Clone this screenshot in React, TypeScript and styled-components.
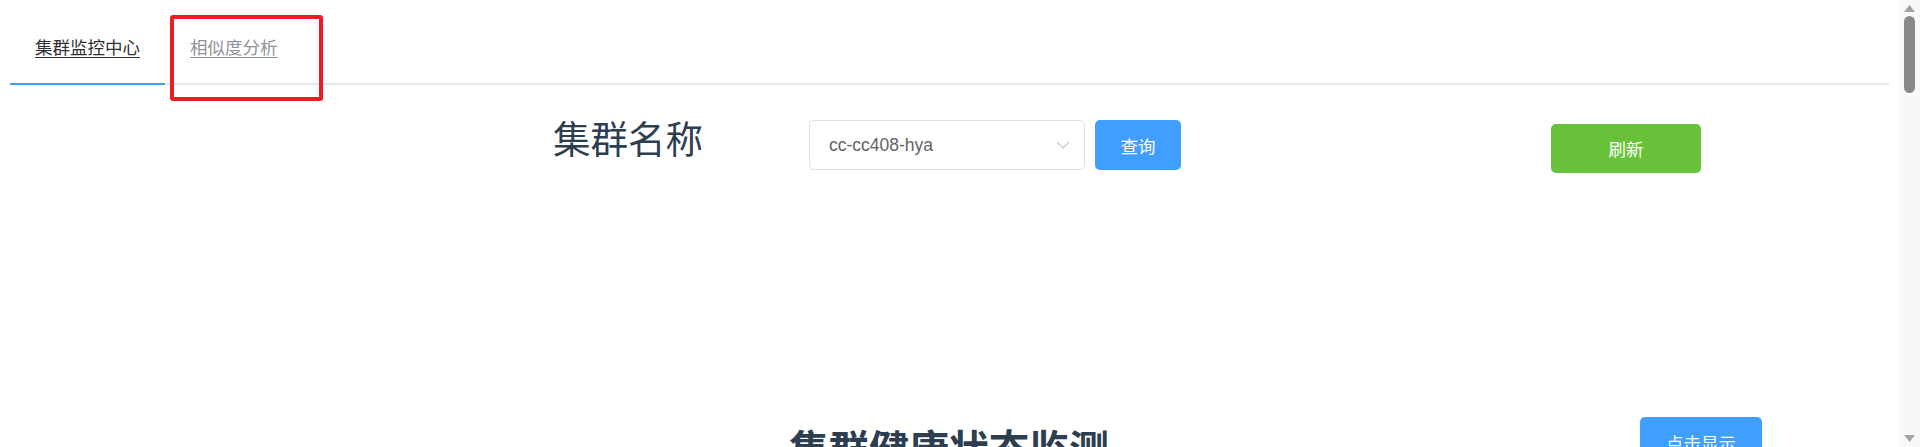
import React from "react";
import styled, { createGlobalStyle, css } from "styled-components";

const GlobalStyle = createGlobalStyle`
  html, body {
    scrollbar-width: none;
  }
  body {
    margin: 0;
    background: #ffffff;
    font-family: "Liberation Sans", "Noto Sans CJK SC", Arial, sans-serif;
    color: #2c3e50;
  }
`;

const Shell = styled.div`
  display: flex;
  align-items: flex-start;
`;

const Page = styled.div`
  flex: 1;
  min-width: 0;
  padding: 10px;
  min-height: 2380px;
  box-sizing: border-box;
`;

const Rail = styled.aside`
  position: sticky;
  top: 0;
  flex: none;
  width: 21px;
  height: 100vh;
  background: #f8f8f8;
  display: flex;
  flex-direction: column;
  align-items: center;
`;

const RailArrow = styled.svg<{ $bottom?: boolean }>`
  display: block;
  margin-top: ${(p) => (p.$bottom ? "auto" : "5px")};
  margin-bottom: ${(p) => (p.$bottom ? "5px" : "0")};
`;

const Thumb = styled.div`
  margin-top: 4px;
  width: 11px;
  height: 77px;
  border-radius: 6px;
  background: #8a8a8a;
`;

const Tabs = styled.div`
  position: relative;
`;

const TabNav = styled.nav`
  display: flex;
  height: 73px;
  border-bottom: 2px solid #e4e7ed;
`;

const TabItem = styled.a<{ $active?: boolean }>`
  position: relative;
  display: block;
  padding: 0 25px;
  line-height: 73px;
  font-size: 17.5px;
  font-family: "Noto Sans CJK SC", sans-serif;
  text-decoration: underline;
  text-underline-offset: 3px;
  text-decoration-thickness: 1px;
  color: ${(p) => (p.$active ? "#303133" : "#909399")};
  cursor: pointer;
  ${(p) =>
    p.$active &&
    css`
      &::after {
        content: "";
        position: absolute;
        left: 0;
        right: 0;
        bottom: -2px;
        height: 2px;
        background: #409eff;
      }
    `}
`;

const Highlight = styled.div`
  position: absolute;
  left: 160px;
  top: 5px;
  width: 153px;
  height: 86px;
  box-sizing: border-box;
  border: 4px solid #ec1c24;
  border-radius: 3px;
  pointer-events: none;
`;

const SearchRow = styled.div`
  display: flex;
  align-items: flex-start;
  margin-top: 35px;
  height: 50px;
`;

const Title = styled.h1`
  margin: -2px 0 0 543px;
  width: 256px;
  font-size: 37.5px;
  line-height: 1;
  font-weight: 400;
  font-family: "Noto Sans CJK SC", sans-serif;
  color: #2c3e50;
`;

const Select = styled.div`
  display: flex;
  align-items: center;
  justify-content: space-between;
  width: 276px;
  height: 50px;
  box-sizing: border-box;
  padding: 0 14px 0 19px;
  border: 1px solid #dcdfe6;
  border-radius: 5px;
  font-size: 17.5px;
  color: #606266;
  font-family: "Liberation Sans", Arial, sans-serif;
`;

const Button = styled.button<{ $color: string; $w: number; $h?: number }>`
  width: ${(p) => p.$w}px;
  height: ${(p) => p.$h ?? 50}px;
  border: none;
  border-radius: 5px;
  background: ${(p) => p.$color};
  color: #ffffff;
  font-size: 17.5px;
  font-family: "Noto Sans CJK SC", sans-serif;
  padding: 0;
  cursor: pointer;
`;

const QueryButton = styled(Button)`
  margin-left: 10px;
`;

const RefreshButton = styled(Button)`
  margin: 4px 0 0 370px;
`;

const HealthRow = styled.div`
  display: flex;
  align-items: flex-start;
  margin-top: 247px;
`;

const Heading = styled.h2`
  margin: 10px 0 0 779px;
  width: 320px;
  font-size: 40px;
  line-height: 1;
  font-weight: 700;
  font-family: "Noto Sans CJK SC", sans-serif;
  color: #2c3e50;
  white-space: nowrap;
`;

const ShowButton = styled(Button)`
  margin-left: 531px;
`;

const Chevron = () => (
  <svg width="14" height="8" viewBox="0 0 14 8" fill="none">
    <polyline points="1,1 7,7 13,1" stroke="#c0c4cc" strokeWidth="1.2" />
  </svg>
);

export default function App() {
  return (
    <>
      <GlobalStyle />
      <Shell>
        <Page>
          <Tabs>
            <TabNav>
              <TabItem $active>集群监控中心</TabItem>
              <TabItem>相似度分析</TabItem>
            </TabNav>
            <Highlight />
          </Tabs>
          <SearchRow>
            <Title>集群名称</Title>
            <Select>
              <span>cc-cc408-hya</span>
              <Chevron />
            </Select>
            <QueryButton $color="#409eff" $w={86}>
              查询
            </QueryButton>
            <RefreshButton $color="#67c23a" $w={150} $h={49}>
              刷新
            </RefreshButton>
          </SearchRow>
          <HealthRow>
            <Heading>集群健康状态监测</Heading>
            <ShowButton $color="#409eff" $w={122}>
              点击显示
            </ShowButton>
          </HealthRow>
        </Page>
        <Rail>
          <RailArrow width="11" height="7" viewBox="0 0 11 7">
            <polygon points="0,7 5.5,0 11,7" fill="#a3a3a3" />
          </RailArrow>
          <Thumb />
          <RailArrow $bottom width="11" height="7" viewBox="0 0 11 7">
            <polygon points="0,0 5.5,7 11,0" fill="#a3a3a3" />
          </RailArrow>
        </Rail>
      </Shell>
    </>
  );
}
